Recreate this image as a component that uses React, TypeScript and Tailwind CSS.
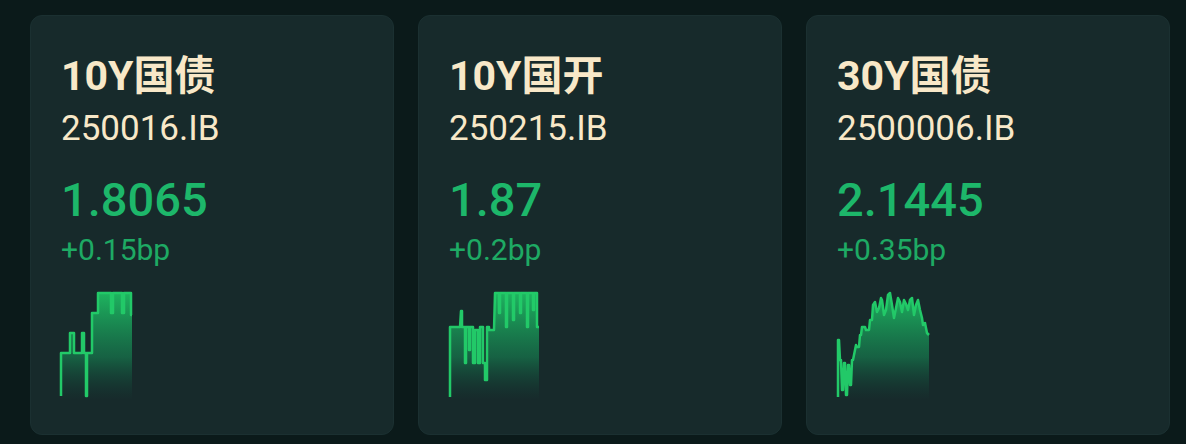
import React from 'react';

type Pt = [number, number];

type Bond = {
  name: string;
  code: string;
  yield: string;
  change: string;
  width: number;
  points: Pt[];
};

const BASE = 110;

const bonds: Bond[] = [
  {
    name: '10Y国债',
    code: '250016.IB',
    yield: '1.8065',
    change: '+0.15bp',
    width: 76,
    points: [
      [2, 106], [2, 63], [11, 63], [11, 43], [15, 43], [15, 63], [23, 63], [23, 43],
      [25, 43], [25, 63], [27, 63], [27, 106], [28, 106], [28, 63], [33, 63], [33, 23],
      [39, 23], [39, 3], [52, 3], [52, 23], [54, 23], [54, 3], [63, 3], [63, 23],
      [65, 23], [65, 3], [72, 3], [72, 25], [73, 25],
    ],
  },
  {
    name: '10Y国开',
    code: '250215.IB',
    yield: '1.87',
    change: '+0.2bp',
    width: 94,
    points: [
      [3, 107], [3, 37], [13, 37], [14, 21], [15, 21], [15, 37], [18, 37], [18, 73],
      [19, 73], [19, 37], [22, 37], [22, 60], [23, 60], [23, 37], [26, 37], [26, 73],
      [28, 73], [28, 40], [31, 40], [31, 73], [33, 73], [33, 37], [36, 37], [36, 73],
      [38, 73], [38, 90], [40, 90], [40, 37], [42, 37], [42, 40], [47, 40], [48, 3],
      [52, 3], [52, 23], [53, 23], [53, 3], [59, 3], [59, 37], [60, 37], [60, 3],
      [66, 3], [66, 30], [67, 30], [67, 3], [73, 3], [73, 23], [74, 23], [74, 3],
      [80, 3], [80, 37], [81, 37], [81, 3], [86, 3], [86, 20], [87, 20], [87, 3],
      [90, 3], [90, 37], [92, 37],
    ],
  },
  {
    name: '30Y国债',
    code: '2500006.IB',
    yield: '2.1445',
    change: '+0.35bp',
    width: 98,
    points: [
      [3, 107], [3, 50], [4, 50], [5, 70], [6, 70], [7, 100], [8, 100], [9, 73],
      [10, 73], [11, 105], [12, 105], [13, 75], [14, 75], [15, 95], [16, 95], [17, 70],
      [18, 70], [19, 65], [20, 60], [21, 55], [22, 57], [24, 57], [25, 45], [26, 45],
      [27, 37], [30, 37], [31, 40], [34, 40], [35, 30], [37, 30], [38, 15], [40, 12],
      [42, 22], [44, 18], [46, 8], [47, 10], [49, 25], [51, 20], [53, 5], [55, 3],
      [57, 15], [59, 28], [61, 18], [63, 8], [65, 12], [67, 22], [69, 10], [71, 14],
      [73, 20], [75, 10], [77, 8], [79, 25], [81, 15], [83, 10], [85, 20], [87, 28],
      [88, 35], [90, 33], [92, 43], [94, 45],
    ],
  },
];

function Sparkline({ points, width, id }: { points: Pt[]; width: number; id: string }) {
  const line = points.map(([x, y]) => `${x},${y}`).join(' ');
  const first = points[0][0];
  const last = points[points.length - 1][0];
  const area = `${first},${BASE} ${line} ${last},${BASE}`;
  return (
    <svg width={width} height={112} viewBox={`0 0 ${width} 112`} className="block">
      <defs>
        <linearGradient id={id} x1="0" y1="0" x2="0" y2="1">
          <stop offset="0%" stopColor="#1fc465" stopOpacity="0.9" />
          <stop offset="60%" stopColor="#16995b" stopOpacity="0.5" />
          <stop offset="100%" stopColor="#0f5b43" stopOpacity="0" />
        </linearGradient>
      </defs>
      <polygon points={area} fill={`url(#${id})`} />
      <polyline points={line} fill="none" stroke="#22c968" strokeWidth={2.5} strokeLinejoin="round" />
    </svg>
  );
}

function BondCard({ bond, idx }: { bond: Bond; idx: number }) {
  return (
    <div className="w-[364px] h-[420px] shrink-0 rounded-xl bg-[#172a2b] border border-[#1b3031] pl-[30px] pr-6 pt-[36px] flex flex-col">
      <div className="text-[41px] leading-[49px] font-bold text-[#f8e8c8]">{bond.name}</div>
      <div className="mt-[7px] text-[35px] leading-[42px] text-[#f8e8c8]">{bond.code}</div>
      <div className="mt-[22px] text-[47px] leading-[56px] font-medium text-[#1db76a]">{bond.yield}</div>
      <div className="mt-[4px] text-[30px] leading-[36px] text-[#1eaa64]">{bond.change}</div>
      <div className="mt-[22px] -ml-[2px]">
        <Sparkline points={bond.points} width={bond.width} id={`spark-${idx}`} />
      </div>
    </div>
  );
}

export default function App() {
  return (
    <div
      className="w-[1186px] h-[444px] overflow-hidden bg-[#0b1a1a] pl-[30px] pt-[15px] flex gap-6"
      style={{ fontFamily: 'Roboto, "Noto Sans CJK SC", sans-serif' }}
    >
      {bonds.map((b, i) => (
        <BondCard key={b.code} bond={b} idx={i} />
      ))}
    </div>
  );
}
